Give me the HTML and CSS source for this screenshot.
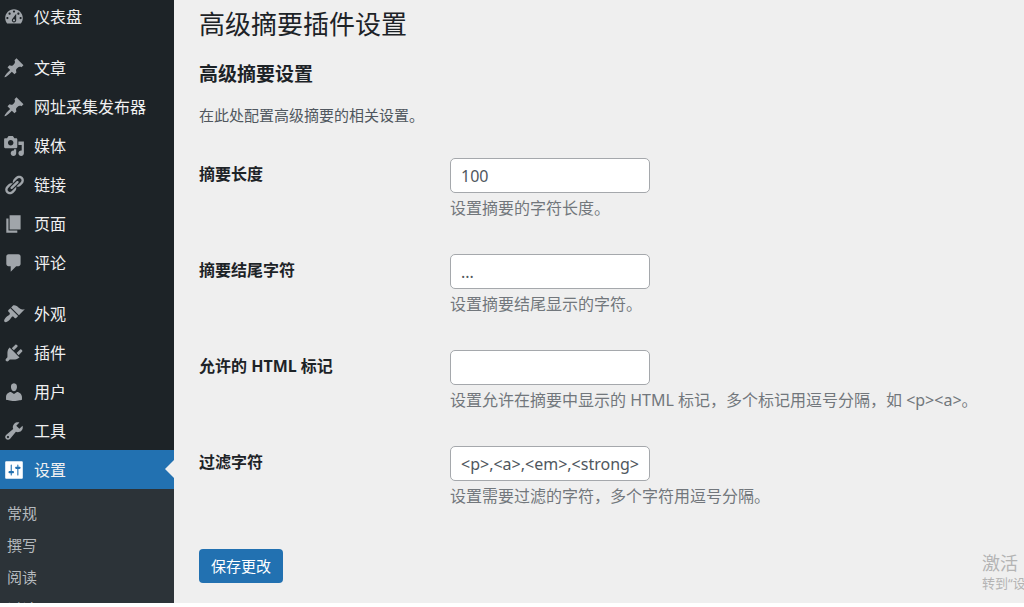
FILE: index.html
```html
<!DOCTYPE html>
<html lang="zh-CN">
<head>
    <meta charset="UTF-8">
    <meta name="viewport" content="width=device-width, initial-scale=1.0">
    <title>高级摘要插件设置</title>
    <link rel="stylesheet" href="styles.css">
</head>
<body>

    <div class="admin">
        <nav class="sidebar">
            <ul class="menu">
                <li><a href="#"><svg viewBox="0 0 20 20"><path fill-rule="evenodd" d="M3.76 16h12.48c1.1-1.37 1.76-3.11 1.76-5 0-4.42-3.58-8-8-8s-8 3.58-8 8c0 1.89.66 3.63 1.76 5zM10 4c.55 0 1 .45 1 1s-.45 1-1 1-1-.45-1-1 .45-1 1-1zM6 6c.55 0 1 .45 1 1s-.45 1-1 1-1-.45-1-1 .45-1 1-1zm8 0c.55 0 1 .45 1 1s-.45 1-1 1-1-.45-1-1 .45-1 1-1zm-5.37 5.55L12 7v6c0 1.1-.9 2-2 2s-2-.9-2-2c0-.57.24-1.08.63-1.45zM4 10c.55 0 1 .45 1 1s-.45 1-1 1-1-.45-1-1 .45-1 1-1zm12 0c.55 0 1 .45 1 1s-.45 1-1 1-1-.45-1-1 .45-1 1-1zm-5 3c0-.55-.45-1-1-1s-1 .45-1 1 .45 1 1 1 1-.45 1-1z"/></svg>仪表盘</a></li>
                <li class="group"><a href="#"><svg viewBox="0 0 20 20"><path d="M10.44 3.02l1.82-1.82 6.36 6.35-1.83 1.82c-1.05-.68-2.48-.57-3.41.36l-.75.75c-.92.93-1.04 2.35-.35 3.41l-1.83 1.82-2.41-2.41-2.8 2.79c-.42.42-3.38 2.71-3.8 2.29s1.86-3.39 2.28-3.81l2.79-2.79L4.1 9.36l1.83-1.82c1.05.69 2.48.57 3.4-.36l.75-.75c.93-.92 1.05-2.35.36-3.41z"/></svg>文章</a></li>
                <li><a href="#"><svg viewBox="0 0 20 20"><path d="M10.44 3.02l1.82-1.82 6.36 6.35-1.83 1.82c-1.05-.68-2.48-.57-3.41.36l-.75.75c-.92.93-1.04 2.35-.35 3.41l-1.83 1.82-2.41-2.41-2.8 2.79c-.42.42-3.38 2.71-3.8 2.29s1.86-3.39 2.28-3.81l2.79-2.79L4.1 9.36l1.83-1.82c1.05.69 2.48.57 3.4-.36l.75-.75c.93-.92 1.05-2.35.36-3.41z"/></svg>网址采集发布器</a></li>
                <li><a href="#"><svg viewBox="0 0 20 20"><path fill-rule="evenodd" d="M13 11V4c0-.55-.45-1-1-1h-1.67L9 1H5L3.67 3H2c-.55 0-1 .45-1 1v7c0 .55.45 1 1 1h10c.55 0 1-.45 1-1zM7 4.5c1.38 0 2.5 1.12 2.5 2.5S8.38 9.5 7 9.5 4.5 8.38 4.5 7 5.62 4.5 7 4.5zM14 6h5v10.5c0 1.38-1.12 2.5-2.5 2.5S14 17.88 14 16.5s1.12-2.5 2.5-2.5c.17 0 .34.02.5.05V9h-3V6zm-4 8.05V13h2v3.5c0 1.38-1.12 2.5-2.5 2.5S7 17.88 7 16.5 8.12 14 9.5 14c.17 0 .34.02.5.05z"/></svg>媒体</a></li>
                <li><a href="#"><svg viewBox="0 0 20 20"><path d="M17.74 2.76c1.68 1.69 1.68 4.41 0 6.1l-1.53 1.52c-1.12 1.12-2.7 1.47-4.14 1.09l2.62-2.61.76-.77.76-.76c.84-.84.84-2.2 0-3.04-.84-.85-2.2-.85-3.04 0l-.77.76-3.38 3.38c-.37-1.44-.02-3.02 1.1-4.14l1.52-1.53c1.69-1.68 4.42-1.68 6.1 0zM8.59 13.43l5.34-5.34c.42-.42.42-1.1 0-1.52-.44-.43-1.13-.39-1.53 0l-5.33 5.34c-.42.42-.42 1.1 0 1.52.44.43 1.13.39 1.52 0zm-.76 2.29l4.14-4.15c.38 1.44.03 3.02-1.09 4.14l-1.52 1.53c-1.69 1.68-4.41 1.68-6.1 0-1.68-1.68-1.68-4.42 0-6.1l1.53-1.52c1.12-1.12 2.7-1.47 4.14-1.1l-4.14 4.15c-.85.84-.85 2.2 0 3.05.84.84 2.2.84 3.04 0z"/></svg>链接</a></li>
                <li><a href="#"><svg viewBox="0 0 20 20"><path d="M6 15V2h10v13H6zm-1 1h8v2H3V5h2v11z"/></svg>页面</a></li>
                <li><a href="#"><svg viewBox="0 0 20 20"><path d="M5 2h9c1.1 0 2 .9 2 2v7c0 1.1-.9 2-2 2h-2l-5 5v-5H5c-1.1 0-2-.9-2-2V4c0-1.1.9-2 2-2z"/></svg>评论</a></li>
                <li class="group"><a href="#"><svg viewBox="0 0 20 20"><path d="M14.48 11.06L7.41 3.99l1.5-1.5c.5-.56 2.3-.47 3.51.32 1.21.8 1.43 1.28 2.91 2.1 1.18.64 2.45 1.26 4.45.85zm-.71.71L6.7 4.7 4.93 6.47c-.39.39-.39 1.02 0 1.41l1.06 1.06c.39.39.39 1.03 0 1.42-.6.6-1.43 1.11-2.21 1.69-.35.26-.7.53-1.01.84C1.43 14.23.4 16.08 1.4 17.07c.99 1 2.84-.03 4.18-1.36.31-.31.58-.66.85-1.02.57-.78 1.08-1.61 1.69-2.21.39-.39 1.02-.39 1.41 0l1.06 1.06c.39.39 1.02.39 1.41 0z"/></svg>外观</a></li>
                <li><a href="#"><svg viewBox="0 0 20 20"><path d="M13.11 4.36L9.87 7.6 8 5.73l3.24-3.24c.35-.34 1.05-.2 1.56.32.52.51.66 1.21.31 1.55zm-8 1.77l.91-1.12 9.01 9.01-1.19.84c-.71.71-2.63 1.16-3.82 1.16H6.14L4.9 17.26c-.59.59-1.54.59-2.12 0-.59-.58-.59-1.53 0-2.12l1.24-1.24v-3.88c0-1.13.4-3.19 1.09-3.89zm7.26 3.97l3.24-3.24c.34-.35 1.04-.21 1.55.31.52.51.66 1.21.31 1.55l-3.24 3.25z"/></svg>插件</a></li>
                <li><a href="#"><svg viewBox="0 0 20 20"><path d="M10 9.25c-2.27 0-2.73-3.44-2.73-3.44C7 4.02 7.82 2 9.97 2c2.16 0 2.98 2.02 2.71 3.81 0 0-.41 3.44-2.68 3.44zm0 2.57L12.72 10c2.39 0 4.52 2.33 4.52 4.53v2.49s-3.65 1.13-7.24 1.13c-3.65 0-7.24-1.13-7.24-1.13v-2.49c0-2.25 1.94-4.48 4.47-4.48z"/></svg>用户</a></li>
                <li><a href="#"><svg viewBox="0 0 20 20"><path fill-rule="evenodd" d="M16.68 9.77c-1.34 1.34-3.3 1.67-4.95.99l-5.41 6.52c-.99.99-2.59.99-3.58 0s-.99-2.59 0-3.57l6.52-5.42c-.68-1.65-.35-3.61.99-4.95 1.28-1.28 3.12-1.62 4.72-1.06l-2.89 2.89 2.82 2.82 2.86-2.87c.53 1.58.18 3.39-1.08 4.65zM3.81 16.21c.4.39 1.04.39 1.43 0 .4-.4.4-1.04 0-1.43-.39-.4-1.03-.4-1.43 0-.39.39-.39 1.03 0 1.43z"/></svg>工具</a></li>
                <li class="current"><a href="#"><svg viewBox="0 0 20 20"><path fill-rule="evenodd" d="M18 17V3c0-.55-.45-1-1-1H3c-.55 0-1 .45-1 1v14c0 .55.45 1 1 1h14c.55 0 1-.45 1-1zM8 11h1c.55 0 1 .45 1 1s-.45 1-1 1H8v1.5c0 .28-.22.5-.5.5s-.5-.22-.5-.5V13H6c-.55 0-1-.45-1-1s.45-1 1-1h1V5.5c0-.28.22-.5.5-.5s.5.22.5.5V11zm5-2h-1c-.55 0-1-.45-1-1s.45-1 1-1h1V5.5c0-.28.22-.5.5-.5s.5.22.5.5V7h1c.55 0 1 .45 1 1s-.45 1-1 1h-1v5.5c0 .28-.22.5-.5.5s-.5-.22-.5-.5V9z"/></svg>设置</a></li>
            </ul>
            <ul class="submenu">
                <li><a href="#">常规</a></li>
                <li><a href="#">撰写</a></li>
                <li><a href="#">阅读</a></li>
                <li><a href="#">讨论</a></li>
            </ul>
        </nav>

        <main class="content">
            <h1>高级摘要插件设置</h1>
            <h2>高级摘要设置</h2>
            <p class="intro">在此处配置高级摘要的相关设置。</p>

            <form>
                <div class="field">
                    <label for="length">摘要长度</label>
                    <div>
                        <input type="text" id="length" value="100">
                        <p class="description">设置摘要的字符长度。</p>
                    </div>
                </div>
                <div class="field">
                    <label for="ending">摘要结尾字符</label>
                    <div>
                        <input type="text" id="ending" value="...">
                        <p class="description">设置摘要结尾显示的字符。</p>
                    </div>
                </div>
                <div class="field">
                    <label for="allowed">允许的 HTML 标记</label>
                    <div>
                        <input type="text" id="allowed" value="">
                        <p class="description">设置允许在摘要中显示的 HTML 标记，多个标记用逗号分隔，如 &lt;p&gt;&lt;a&gt;。</p>
                    </div>
                </div>
                <div class="field">
                    <label for="filter">过滤字符</label>
                    <div>
                        <input type="text" id="filter" value="&lt;p&gt;,&lt;a&gt;,&lt;em&gt;,&lt;strong&gt;">
                        <p class="description">设置需要过滤的字符，多个字符用逗号分隔。</p>
                    </div>
                </div>
                <button type="submit" class="save-btn">保存更改</button>
            </form>
        </main>

        <div class="watermark">
            <div class="watermark-title">激活</div>
            <div>转到“设</div>
        </div>
    </div>

</body>
</html>
```

FILE: styles.css
```css
* { box-sizing: border-box; }
body {
    margin: 0; background: white; color: #3c434a;
    font-family: "Noto Sans", "Noto Sans CJK SC", sans-serif;
    font-size: 16px; line-height: 24px;
}
.admin {
    display: flex; position: relative;
    height: calc(100vh - 4px); overflow: hidden;
    background: #efefef;
}

/* sidebar */
.sidebar { flex: 0 0 174px; background: #2c3338; }
.sidebar ul { list-style: none; margin: 0; padding: 0; }
.sidebar a { color: #f0f0f1; text-decoration: none; }
.sidebar .menu { margin-top: -3px; background: #1d2327; }
.menu a { display: flex; align-items: center; gap: 9px; height: 39px; padding-left: 3px; }
.menu svg { width: 22px; height: 22px; fill: #a0a5aa; }
.menu .group { padding-top: 12px; }
.menu .current { position: relative; background: #2271b1; }
.menu .current svg { fill: white; }
.menu .current::after {
    content: ""; position: absolute; right: 0; top: 10px;
    border: 9px solid transparent; border-left: 0; border-right-color: #efefef;
}
.sidebar .submenu { padding-top: 8px; }
.submenu a { display: block; padding-left: 7px; font-size: 15px; line-height: 32px; color: #b5babe; }

/* settings form */
.content { flex: 1; padding: 4px 25px; }
h1 { margin: 0; font-size: 26px; line-height: 40px; font-weight: 400; color: #1d2327; }
h2 { margin: 16px 0 15px; font-size: 19px; line-height: 28px; color: #1d2327; }
.intro { margin: 0 0 31px; font-size: 15px; color: #50575e; }
.field { display: grid; grid-template-columns: 251px 1fr; margin-bottom: 34px; }
.field label { padding-top: 4px; font-weight: 700; color: #1d2327; }
.field input {
    display: block; width: 200px; height: 35px; padding: 0 10px;
    border: 1px solid #a5a8ac; border-radius: 5px; background: white;
    font: inherit; color: #50575e;
}
.description { margin: 3px 0 0; color: #72777c; }
.save-btn {
    height: 34px; margin-top: 7px; padding: 0 12px; border: 0; border-radius: 4px;
    background: #2271b1; color: white; font: inherit; font-size: 15px;
}

.watermark {
    position: absolute; right: 0; bottom: 10px; width: 42px;
    overflow: hidden; white-space: nowrap;
    font-size: 13px; line-height: 20px; color: #b4b4b4;
}
.watermark-title { font-size: 18px; }
```
